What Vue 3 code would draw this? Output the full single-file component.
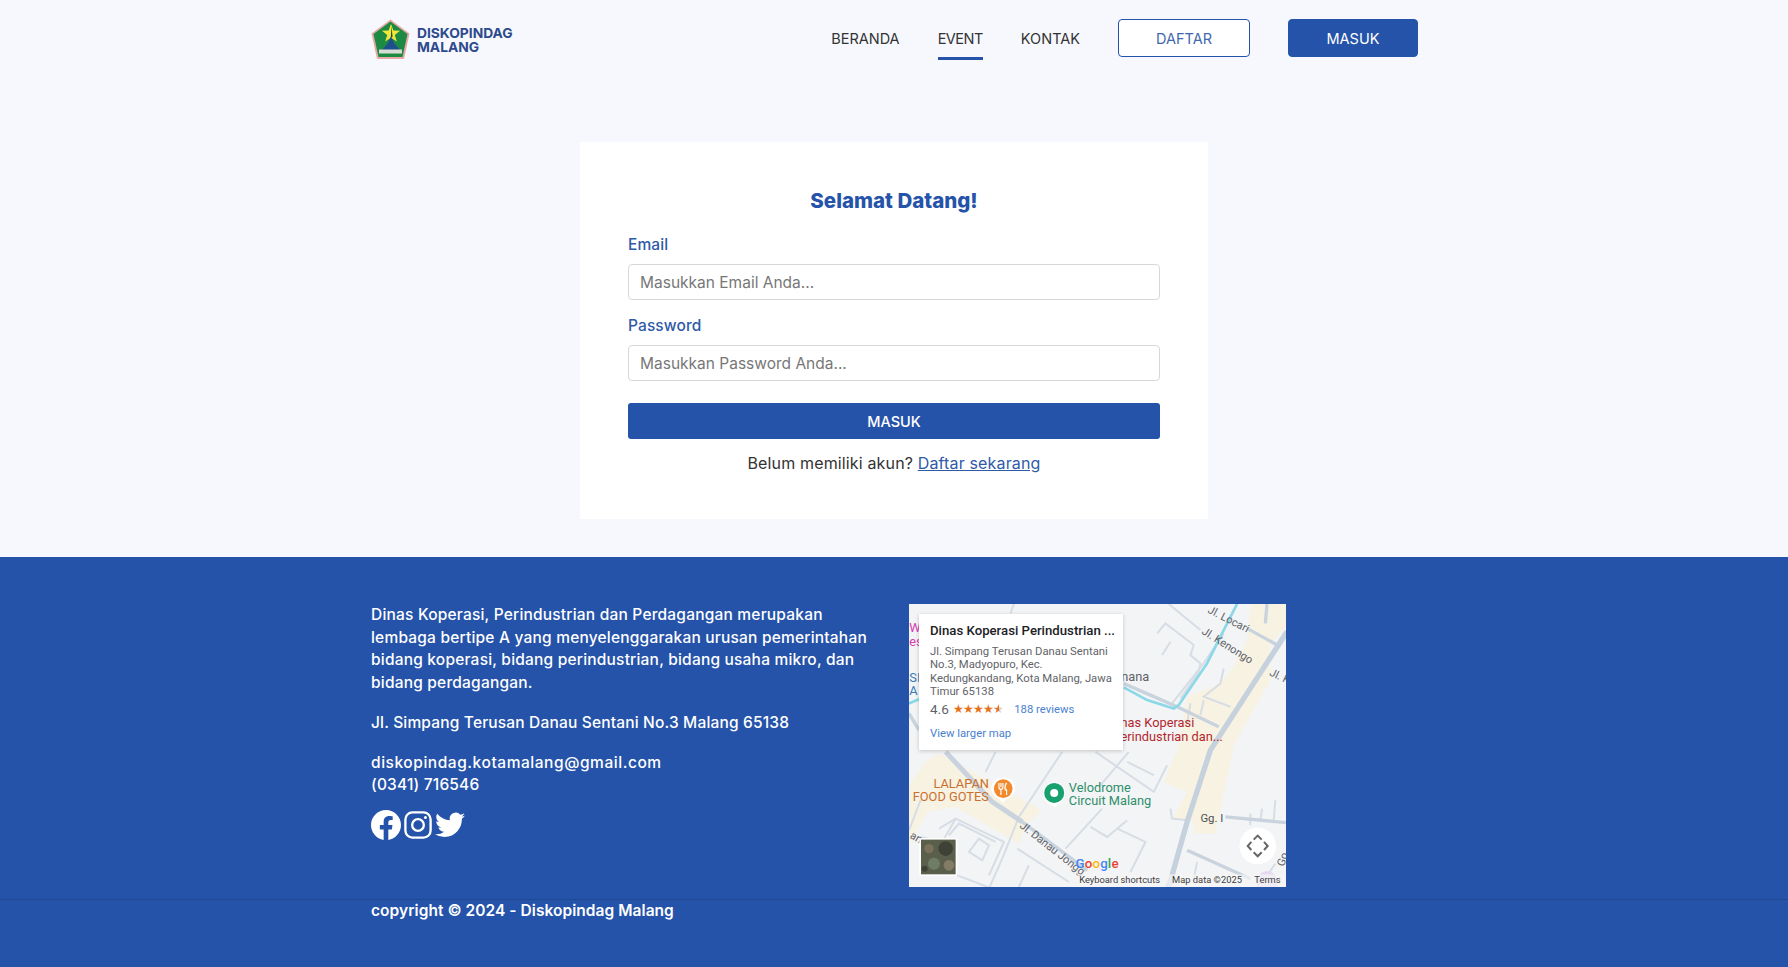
<script setup>
// map coordinates are 3x the real pixels, the svg viewBox scales them back
const thinRoads = [
  'M815 310 L910 190 L970 100',
  'M770 100 L795 70 L880 135 L870 165 L900 190 L895 215 L840 295',
  'M810 125 L785 165',
  'M805 12 L900 90',
  'M970 205 L960 250 L910 290 L990 320',
  'M910 300 L900 345',
  'M870 310 L860 370',
  'M485 455 L355 650 L305 775 L265 865',
  'M285 455 L255 515',
  'M115 685 L165 655 L310 725 L265 825',
  'M145 705 L175 670 L285 725',
  'M205 755 L235 715 L265 735 L245 780 Z',
  'M165 655 L125 725 L60 710',
  'M170 825 L275 865',
  'M350 745 L505 845',
  'M385 795 L355 860',
  'M605 625 L495 745',
  'M650 685 L735 725 L690 815',
  'M570 680 L620 710 L680 660',
  'M585 455 L760 575 L800 495',
  'M680 485 L760 525',
  'M685 455 L600 555',
  'M1050 640 L1050 675',
  'M1085 625 L1080 665',
  'M1125 600 L1120 660',
  'M810 625 L815 655 L860 660',
  'M890 785 L880 835',
  'M340 12 L330 40',
  'M25 690 L60 600',
  'M1125 790 L1090 840'
]
const midRoads = [
  'M670 250 L750 285 L830 320 L955 380',
  'M1100 12 L1095 70',
  'M1040 85 L1140 140',
  'M860 750 L1050 835',
  'M975 650 L1157 667',
  'M25 340 L55 390',
  'M365 665 L560 810'
]
</script>

<template>
  <div class="page">
    <header class="topbar">
      <div class="wrap nav-row">
        <a class="logo">
          <svg width="39" height="41" viewBox="0 0 39 41">
            <path d="M19.500 0.500 L38.500 14.500 L33 40 L6 40 L0.500 14.500 Z" fill="#e7a9a4" />
            <path d="M19.500 2.500 L36.500 15 L31.500 38 L7.500 38 L2.500 15 Z" fill="#1d8a43" />
            <path d="M20 5 L22.400 11.500 L29 11.700 L23.800 16 L25.800 22.500 L20 18.800 L14.200 22.500 L16.200 16 L11 11.700 L17.600 11.500 Z" fill="#eee83a" />
            <path d="M20.500 7 L21.500 18 L20 18 Z" fill="#17341f" />
            <path d="M20 17 L23 24 L29 31 L11 31 L17 24 Z" fill="#1f4e8f" />
            <rect x="8" y="30.500" width="23" height="4" fill="#d7ddd3" />
          </svg>
          <span class="logo-text">DISKOPINDAG<br />MALANG</span>
        </a>
        <nav class="menu">
          <a class="menu-link">BERANDA</a>
          <a class="menu-link active">EVENT</a>
          <a class="menu-link">KONTAK</a>
          <a class="btn btn-outline">DAFTAR</a>
          <a class="btn btn-solid">MASUK</a>
        </nav>
      </div>
    </header>

    <main class="content">
      <form class="card" @submit.prevent>
        <h1>Selamat Datang!</h1>
        <label for="email">Email</label>
        <input id="email" type="text" placeholder="Masukkan Email Anda..." />
        <label for="password">Password</label>
        <input id="password" type="password" placeholder="Masukkan Password Anda..." />
        <button type="submit">MASUK</button>
        <p class="signup">Belum memiliki akun? <a>Daftar sekarang</a></p>
      </form>
    </main>

    <footer class="footer">
      <div class="wrap footer-row">
        <div class="about">
          <p class="intro">Dinas Koperasi, Perindustrian dan Perdagangan merupakan lembaga bertipe A yang menyelenggarakan urusan pemerintahan bidang koperasi, bidang perindustrian, bidang usaha mikro, dan bidang perdagangan.</p>
          <p>Jl. Simpang Terusan Danau Sentani No.3 Malang 65138</p>
          <p class="contact"><span class="mail">diskopindag.kotamalang@gmail.com</span><br />(0341) 716546</p>
          <div class="socials">
            <svg width="30" height="30" viewBox="0 0 24 24" fill="#fff"><path d="M24 12.07C24 5.4 18.63 0 12 0S0 5.4 0 12.07c0 6.03 4.39 11.02 10.13 11.93v-8.44H7.08v-3.49h3.05V9.41c0-3.02 1.79-4.69 4.53-4.69 1.31 0 2.68.24 2.68.24v2.97h-1.51c-1.49 0-1.96.93-1.96 1.89v2.25h3.33l-.53 3.49h-2.8V24C19.61 23.09 24 18.1 24 12.07z" /></svg>
            <svg width="28" height="28" viewBox="0 0 24 24" fill="none" stroke="#fff"><rect x="1.2" y="1.2" width="21.6" height="21.6" rx="6" stroke-width="2" /><circle cx="12" cy="12" r="5" stroke-width="2" /><circle cx="18.4" cy="5.6" r="1.3" fill="#fff" stroke="none" /></svg>
            <svg width="30" height="26" viewBox="0 0 24 20" fill="#fff"><path d="M24 2.4c-.9.4-1.8.7-2.8.8 1-.6 1.8-1.6 2.2-2.7-1 .6-2 1-3.1 1.2A4.9 4.9 0 0 0 11.900 6.100C7.800 5.900 4.200 3.900 1.700.9c-.4.7-.7 1.600-.7 2.500 0 1.700.9 3.200 2.200 4.100-.8 0-1.600-.2-2.200-.6v.1c0 2.400 1.700 4.400 3.900 4.800-.7.2-1.500.2-2.200.1.600 2 2.400 3.400 4.600 3.400A9.900 9.900 0 0 1 0 17.300 14 14 0 0 0 7.500 19.500c9.100 0 14-7.500 14-14v-.6c1-.7 1.800-1.600 2.500-2.500z" /></svg>
          </div>
        </div>
        <div class="map">
          <svg class="map-art" viewBox="25 12 1132 848" preserveAspectRatio="none">
            <rect x="25" y="12" width="1132" height="848" fill="#f3f4f5" />
            <path d="M1050 12 L1157 12 L1157 80 L1110 130 L1110 240 L1000 435 L945 700 L880 700 L880 665 L820 650 L860 575 L790 545 L830 450 L860 290 L960 250 L1000 200 L1040 120 Z" fill="#f8f2e2" />
            <path d="M75 485 L115 460 L425 630 L375 675 L355 730 L165 620 L80 635 L25 735 L25 555 Z" fill="#f8f2e2" />
            <path v-for="(r, i) in thinRoads" :key="'t' + i" :d="r" fill="none" stroke="#d6dde5" stroke-width="6" />
            <path v-for="(r, i) in midRoads" :key="'m' + i" :d="r" fill="none" stroke="#c9d3dd" stroke-width="10" />
            <path d="M135 455 L275 605 L365 665" fill="none" stroke="#c9d3dd" stroke-width="15" />
            <path d="M1160 95 L930 450 L860 665 L805 860" fill="none" stroke="#c5d1dc" stroke-width="16" />
            <path d="M1010 12 L970 90 L920 190 L835 315 L820 325 L740 300 L670 262" fill="none" stroke="#8ad8e8" stroke-width="8" />
            <path d="M25 310 L60 295" fill="none" stroke="#8ad8e8" stroke-width="8" />
            <circle cx="1100" cy="845" r="32" fill="#e7d8f2" />
            <g font-family="Roboto, sans-serif" font-size="38.500">
              <text x="662" y="242" fill="#5f6368">nana</text>
              <text x="660" y="382" fill="#b3262e">nas Koperasi</text>
              <text x="660" y="422" fill="#b3262e">erindustrian dan...</text>
              <text x="265" y="562" text-anchor="end" fill="#c8702e">LALAPAN</text>
              <text x="265" y="602" text-anchor="end" fill="#c8702e">FOOD GOTES</text>
              <text x="505" y="574" fill="#2e8f6b">Velodrome</text>
              <text x="505" y="614" fill="#2e8f6b">Circuit Malang</text>
              <text x="26" y="97" fill="#d63bb0">WA</text>
              <text x="26" y="137" fill="#d63bb0">est</text>
              <text x="26" y="245" fill="#3a7bb5">SI</text>
              <text x="26" y="285" fill="#3a7bb5">A</text>
            </g>
            <g font-family="Roboto, sans-serif" font-size="33" fill="#5f6368">
              <text x="900" y="665" font-size="34" fill="#4b5055">Gg. I</text>
              <text transform="translate(920 37) rotate(27)">Jl. Locari</text>
              <text transform="translate(902 100) rotate(32)">Jl. Kenongo</text>
              <text transform="translate(1105 225) rotate(25)">Jl. K</text>
              <text transform="translate(355 680) rotate(38)">Jl. Danau Jongg</text>
              <text transform="translate(26 712) rotate(30)">an</text>
              <text transform="translate(1150 800) rotate(-70)">Go</text>
            </g>
            <path d="M304 533 a32 32 0 0 1 16 62 L308 607 L292 595 a32 32 0 0 1 12 -62 Z" fill="#fff" />
            <circle cx="308" cy="565" r="28" fill="#f08a2c" />
            <path d="M295 548 v12 M301 548 v12 M307 548 v12 M295 560 q0 7 6 7 q6 0 6 -7 M301 567 v17 M318 548 q-7 10 -4 21 h4 v15" stroke="#fff" stroke-width="3.500" fill="none" />
            <path d="M460 545 a34 34 0 0 1 20 62 L462 620 L442 607 a34 34 0 0 1 18 -62 Z" fill="#fff" />
            <circle cx="461" cy="578" r="30" fill="#18a06e" />
            <circle cx="461" cy="578" r="12" fill="#fff" />
            <g font-family="Roboto, sans-serif" font-size="40" font-weight="500">
              <text x="525" y="802" fill="#4285f4">G</text>
              <text x="553" y="802" fill="#ea4335">o</text>
              <text x="576" y="802" fill="#fbbc05">o</text>
              <text x="599" y="802" fill="#4285f4">g</text>
              <text x="622" y="802" fill="#34a853">l</text>
              <text x="633" y="802" fill="#ea4335">e</text>
            </g>
            <rect x="530" y="822" width="262" height="38" fill="#f5f5f5" fill-opacity="0.7" />
            <rect x="800" y="822" width="357" height="38" fill="#f5f5f5" fill-opacity="0.7" />
            <g font-family="Roboto, sans-serif" font-size="28" fill="#3c4043">
              <text x="536" y="849">Keyboard shortcuts</text>
              <text x="815" y="849">Map data ©2025</text>
              <text x="1062" y="849">Terms</text>
            </g>
            <circle cx="1072" cy="737" r="55" fill="#fff" />
            <path d="M1060 718 L1072 706 L1084 718 M1060 756 L1072 768 L1084 756 M1053 725 L1042 737 L1053 749 M1091 725 L1102 737 L1091 749" fill="none" stroke="#666" stroke-width="6" />
            <rect x="56" y="713" width="114" height="114" rx="6" fill="#fff" />
            <rect x="61" y="718" width="104" height="104" fill="#5a5f4c" />
            <circle cx="100" cy="790" r="18" fill="#6f7d66" />
            <circle cx="135" cy="745" r="22" fill="#3f4136" />
            <circle cx="85" cy="745" r="14" fill="#7a705c" />
            <circle cx="145" cy="795" r="16" fill="#847b66" />
            <circle cx="72" cy="805" r="9" fill="#3f4136" />
          </svg>
          <div class="place">
            <div class="place-name">Dinas Koperasi Perindustrian ...</div>
            <div class="place-addr">Jl. Simpang Terusan Danau Sentani No.3, Madyopuro, Kec. Kedungkandang, Kota Malang, Jawa Timur 65138</div>
            <div class="place-rating"><span class="score">4.6</span><span class="stars">★★★★<span class="half">★</span></span><a>188 reviews</a></div>
            <a class="place-link">View larger map</a>
          </div>
        </div>
      </div>
      <div class="copyright">
        <div class="wrap">copyright © 2024 - Diskopindag Malang</div>
      </div>
    </footer>
  </div>
</template>

<style>
html, body {
  margin: 0;
  background: #f6f8fe;
}
</style>

<style scoped>
.page {
  font-family: Inter, "Open Sans", sans-serif;
  color: #333;
  min-height: 967px;
  display: flex;
  flex-direction: column;
  box-sizing: border-box;
}

.wrap {
  width: 1048px;
  margin: 0 auto;
  padding-left: 1px;
  box-sizing: border-box;
}

.topbar {
  height: 80px;
}

.nav-row {
  display: flex;
  justify-content: space-between;
  padding-top: 19px;
}

.logo {
  display: flex;
  gap: 7px;
  align-items: flex-start;
}

.logo-text {
  font-weight: 700;
  font-size: 13.8px;
  line-height: 14px;
  color: #2d4a8c;
  margin-top: 7px;
}

.menu {
  display: flex;
  align-items: flex-start;
}

.menu-link {
  font-size: 14.5px;
  line-height: 20px;
  color: #333;
  margin-right: 38px;
  padding: 10px 0 8px;
}

.menu-link.active {
  border-bottom: 3px solid #2553a9;
  letter-spacing: -0.5px;
}

.btn {
  box-sizing: border-box;
  width: 132px;
  height: 38px;
  line-height: 37px;
  font-size: 14.5px;
  text-align: center;
  border-radius: 4px;
  border: 1px solid #2553a9;
}

.btn-outline {
  background: #fff;
  color: #3f68b0;
  margin-right: 38px;
}

.btn-solid {
  background: #2553a9;
  color: #fff;
  width: 130px;
}

.content {
  flex: 1;
  display: flex;
  justify-content: center;
  padding-top: 62px;
}

.card {
  box-sizing: border-box;
  width: 628px;
  height: 377px;
  background: #fff;
  padding: 45px 48px 0;
  display: flex;
  flex-direction: column;
}

.card h1 {
  margin: 0 0 19px;
  font-size: 20.5px;
  line-height: 28px;
  font-weight: 800;
  text-align: center;
  color: #2553a9;
}

.card label {
  font-size: 15.5px;
  line-height: 22px;
  font-weight: 500;
  letter-spacing: 0.1px;
  color: #2f5aa8;
  margin-bottom: 8px;
}

.card input {
  box-sizing: border-box;
  height: 36px;
  border: 1px solid #d8d8d8;
  border-radius: 4px;
  padding: 0 11px;
  font: 15.5px Inter, sans-serif;
  margin-bottom: 15px;
  outline: none;
}

.card input::placeholder {
  color: #777;
}

.card button {
  height: 36px;
  margin-top: 7px;
  border: 0;
  border-radius: 3px;
  background: #2553a9;
  color: #fff;
  font: 500 14.5px Inter, sans-serif;
}

.signup {
  margin: 13px 0 0;
  font-size: 16px;
  line-height: 22px;
  letter-spacing: 0.15px;
  text-align: center;
  color: #333;
}

.signup a {
  color: #2f5aa8;
  text-decoration: underline;
}

.footer {
  height: 410px;
  background: #2553a9;
  color: #fff;
  padding-top: 47px;
  box-sizing: border-box;
}

.footer-row {
  display: flex;
  height: 295px;
}

.about {
  width: 538px;
  font-size: 15.5px;
  font-weight: 500;
  line-height: 22.7px;
  letter-spacing: 0.17px;
}

.about p {
  margin: 0 0 17px;
}

.about .intro {
  width: 520px;
  letter-spacing: 0.2px;
}

.about .contact {
  margin-bottom: 13px;
}

.mail {
  letter-spacing: 0.55px;
}

.socials {
  display: flex;
  align-items: center;
  gap: 3px;
}

.map {
  position: relative;
  width: 377px;
  height: 283px;
  overflow: hidden;
  flex: none;
}

.map-art {
  display: block;
  width: 100%;
  height: 100%;
}

.place {
  position: absolute;
  left: 10px;
  top: 10px;
  width: 204px;
  height: 136px;
  box-sizing: border-box;
  background: #fff;
  padding: 9px 7px 9px 11px;
  box-shadow: 0 1px 4px rgba(0, 0, 0, 0.2);
  font-family: Roboto, sans-serif;
  font-size: 11.3px;
  line-height: 13.3px;
  color: #5f6368;
}

.place-name {
  font-size: 13.2px;
  font-weight: 500;
  line-height: 16px;
  color: #202124;
  margin-bottom: 6px;
  white-space: nowrap;
}

.place-rating {
  display: flex;
  align-items: center;
  margin: 5px 0 11px;
}

.score {
  font-size: 13.5px;
  margin-right: 4px;
}

.stars {
  color: #e7711b;
  font-size: 12px;
  margin-right: 11px;
  letter-spacing: -0.9px;
}

.half {
  background: linear-gradient(90deg, #e7711b 60%, #ccc 60%);
  -webkit-background-clip: text;
  background-clip: text;
  color: transparent;
}

.place a {
  color: #4a7fd0;
}

.copyright {
  border-top: 1px solid #20498f;
  font-size: 15.5px;
  font-weight: 600;
  line-height: 22px;
  letter-spacing: 0.05px;
}
</style>
